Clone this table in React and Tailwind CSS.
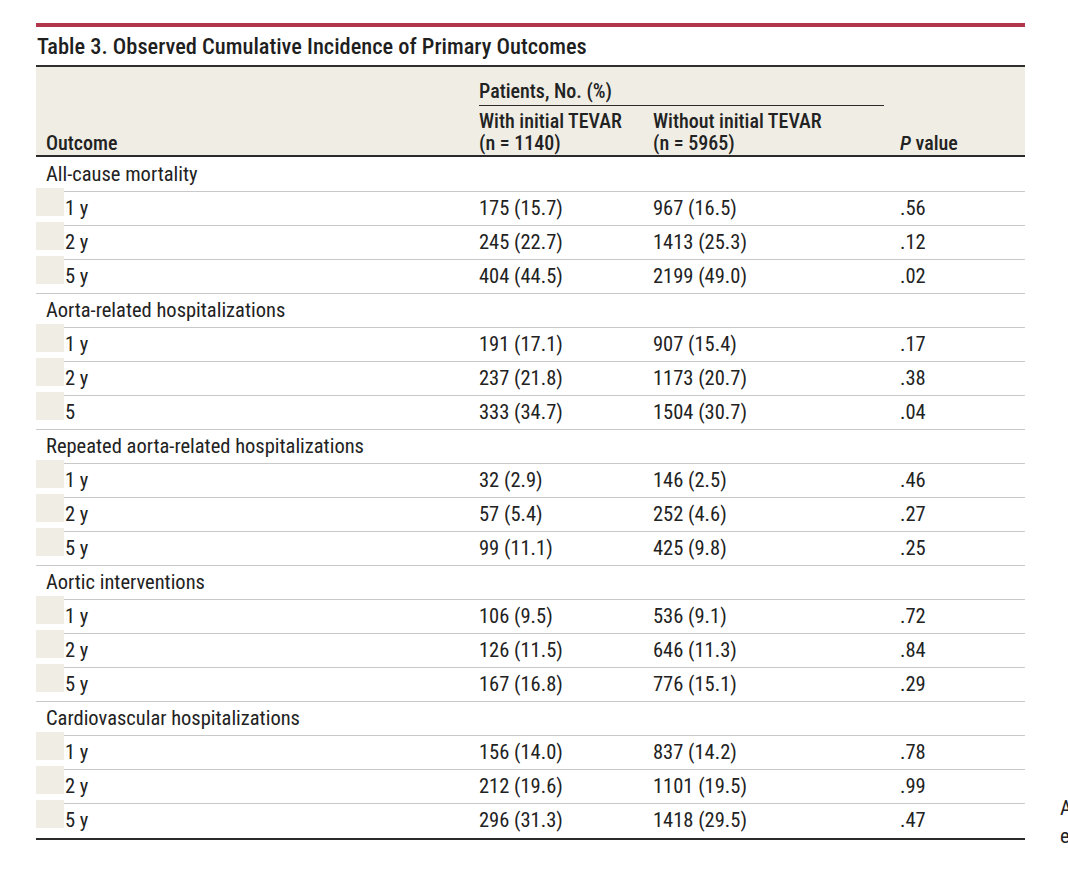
const groups = [
  {
    title: 'All-cause mortality',
    rows: [
      ['1 y', '175 (15.7)', '967 (16.5)', '.56'],
      ['2 y', '245 (22.7)', '1413 (25.3)', '.12'],
      ['5 y', '404 (44.5)', '2199 (49.0)', '.02'],
    ],
  },
  {
    title: 'Aorta-related hospitalizations',
    rows: [
      ['1 y', '191 (17.1)', '907 (15.4)', '.17'],
      ['2 y', '237 (21.8)', '1173 (20.7)', '.38'],
      ['5', '333 (34.7)', '1504 (30.7)', '.04'],
    ],
  },
  {
    title: 'Repeated aorta-related hospitalizations',
    rows: [
      ['1 y', '32 (2.9)', '146 (2.5)', '.46'],
      ['2 y', '57 (5.4)', '252 (4.6)', '.27'],
      ['5 y', '99 (11.1)', '425 (9.8)', '.25'],
    ],
  },
  {
    title: 'Aortic interventions',
    rows: [
      ['1 y', '106 (9.5)', '536 (9.1)', '.72'],
      ['2 y', '126 (11.5)', '646 (11.3)', '.84'],
      ['5 y', '167 (16.8)', '776 (15.1)', '.29'],
    ],
  },
  {
    title: 'Cardiovascular hospitalizations',
    rows: [
      ['1 y', '156 (14.0)', '837 (14.2)', '.78'],
      ['2 y', '212 (19.6)', '1101 (19.5)', '.99'],
      ['5 y', '296 (31.3)', '1418 (29.5)', '.47'],
    ],
  },
];

const cols = 'grid grid-cols-[443px_174px_247px_125px]';

function SubRow({ row, last }) {
  return (
    <div
      className={`${cols} border-t border-[#c9c9c9] items-center ${
        last ? 'h-[37px] pb-[1px] border-b-2 border-b-[#2a2a2a]' : 'h-[34px]'
      }`}
    >
      <div className="flex items-center h-full">
        <div className="relative -top-[3px] z-10 w-[28px] h-[28px] self-start -mt-[1px] bg-[#efede4]" />
        <span className="pl-[1px]">{row[0]}</span>
      </div>
      <div>{row[1]}</div>
      <div>{row[2]}</div>
      <div>{row[3]}</div>
    </div>
  );
}

export default function App() {
  return (
    <div
      className="w-[1068px] h-[872px] overflow-hidden bg-white text-[#222] text-[20.5px] leading-[21px] flex"
      style={{ fontFamily: '"Roboto Condensed", "Liberation Sans", sans-serif' }}
    >
      <div className="ml-[36px] w-[989px] pt-[23px]">
        <div className="h-[4px] bg-[#b2364b]" />
        <div className="h-[38px] flex items-center pl-[1px] pt-[1px] text-[22.4px] font-medium text-[#1f1f1f]">
          Table 3. Observed Cumulative Incidence of Primary Outcomes
        </div>
        <div className="h-[2px] bg-[#2f2f2f]" />

        {/* header */}
        <div className={`${cols} bg-[#efede4] h-[90px] items-end pb-[1px] text-[20px] font-medium border-b-2 border-[#2a2a2a]`}>
          <div className="pl-[10px]">Outcome</div>
          <div className="col-span-2 flex flex-col">
            <div className="pb-[3px] mr-[16px] border-b border-[#2a2a2a]">Patients, No. (%)</div>
            <div className="grid grid-cols-[174px_247px] pt-[5px] leading-[21.5px]">
              <div>
                With initial TEVAR
                <br />
                (n = 1140)
              </div>
              <div>
                Without initial TEVAR
                <br />
                (n = 5965)
              </div>
            </div>
          </div>
          <div>
            <i>P</i> value
          </div>
        </div>

        {groups.map((g, gi) => (
          <div key={g.title}>
            <div className={`h-[34px] flex items-center pl-[10px] ${gi > 0 ? 'border-t border-[#c9c9c9]' : ''}`}>
              {g.title}
            </div>
            {g.rows.map((r, ri) => (
              <SubRow key={ri} row={r} last={gi === groups.length - 1 && ri === g.rows.length - 1} />
            ))}
          </div>
        ))}
      </div>

      <div className="ml-[35px] pt-[794px] flex flex-col leading-[28px] whitespace-nowrap">
        <span>A</span>
        <span>e</span>
      </div>
    </div>
  );
}
